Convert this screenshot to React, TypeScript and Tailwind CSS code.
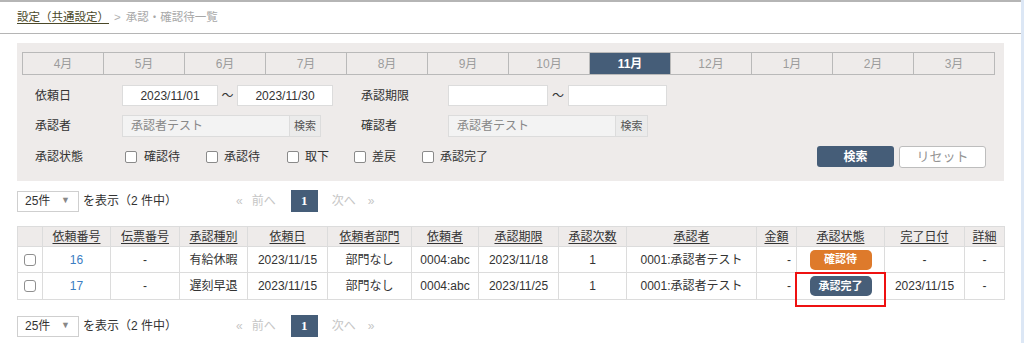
import React from "react";

const FONT = { fontFamily: '"Liberation Sans", "Noto Sans CJK JP", sans-serif' };

const months = ["4月", "5月", "6月", "7月", "8月", "9月", "10月", "11月", "12月", "1月", "2月", "3月"];

function Pager() {
  return (
    <div className="flex items-center h-[22px] text-[12px] text-[#333]">
      <div className="w-[219px] flex items-center">
        <div className="w-[62px] h-[21px] border border-[#cfcfcf] bg-white flex items-center pl-[7px] pr-[8px] justify-between">
          <span>25件</span>
          <span className="text-[9px] text-[#888]">▼</span>
        </div>
        <span className="ml-[4px]">を表示（2 件中）</span>
      </div>
      <span className="text-[#c6c6c6] text-[12px]">«</span>
      <span className="ml-[9px] text-[#c6c6c6]">前へ</span>
      <div className="ml-[15px] w-[27px] h-[22px] bg-[#455d78] text-white font-bold flex items-center justify-center text-[13px]" style={{ fontFamily: '"Liberation Serif", serif' }}>1</div>
      <span className="ml-[14px] text-[#c6c6c6]">次へ</span>
      <span className="ml-[12px] text-[#c6c6c6]">»</span>
    </div>
  );
}

function Check() {
  return <div className="w-[12px] h-[12px] border border-[#8a8a8a] rounded-[2px] bg-white shrink-0" />;
}

const cols = [25, 68, 69, 68, 80, 84, 67, 80, 68, 130, 40, 88, 80, 40];
const headers = ["", "依頼番号", "伝票番号", "承認種別", "依頼日", "依頼者部門", "依頼者", "承認期限", "承認次数", "承認者", "金額", "承認状態", "完了日付", "詳細"];

type Row = {
  no: string; kind: string; date: string; limit: string; status: "wait" | "done"; done: string; h: string;
};
const rows: Row[] = [
  { no: "16", kind: "有給休暇", date: "2023/11/15", limit: "2023/11/18", status: "wait", done: "-", h: "h-[26px]" },
  { no: "17", kind: "遅刻早退", date: "2023/11/15", limit: "2023/11/25", status: "done", done: "2023/11/15", h: "h-[27px]" },
];

export default function App() {
  return (
    <div className="w-[1024px] h-[343px] flex bg-white overflow-hidden text-[#333]" style={FONT}>
      <div className="w-[1021px] flex flex-col">
        <div className="h-[2px] bg-[#b5b5b5]" />
        <div className="h-[31px] flex items-center pl-[17px] text-[11.5px]">
          <span className="text-[#4a4828] underline underline-offset-[2px]">設定（共通設定）</span>
          <span className="text-[#b0b0b0] ml-[5px]">&gt;</span>
          <span className="text-[#a8a8a8] ml-[5px]">承認・確認待一覧</span>
        </div>
        <div className="h-px bg-[#b5b5b5]" />

        <div className="pl-[17px] pt-[9px]">
          {/* filter panel */}
          <div className="w-[987px] bg-[#eeebea] pt-[9px] pl-[5px] pr-[9px] pb-[14px] text-[12px]">
            <div className="flex h-[23px] border border-[#b9b9b9]">
              {months.map((m, i) => (
                <div
                  key={m}
                  className={
                    "flex-1 flex items-center justify-center " +
                    (i > 0 ? "border-l border-[#b9b9b9] " : "") +
                    (m === "11月" ? "bg-[#455d78] text-white font-bold" : "text-[#9c9c9c]")
                  }
                >
                  {m}
                </div>
              ))}
            </div>

            <div className="mt-[10px] h-[21px] flex items-center pl-[13px]">
              <div className="w-[87px]">依頼日</div>
              <div className="w-[239px] flex items-center">
                <div className="w-[96px] h-[21px] bg-white border border-[#dcdcdc] flex items-center justify-center">2023/11/01</div>
                <div className="w-[19px] text-center">～</div>
                <div className="w-[96px] h-[21px] bg-white border border-[#dcdcdc] flex items-center justify-center">2023/11/30</div>
              </div>
              <div className="w-[87px]">承認期限</div>
              <div className="flex items-center">
                <div className="w-[100px] h-[21px] bg-white border border-[#dcdcdc]" />
                <div className="w-[20px] text-center">～</div>
                <div className="w-[99px] h-[21px] bg-white border border-[#dcdcdc]" />
              </div>
            </div>

            <div className="mt-[9px] h-[22px] flex items-center pl-[13px]">
              <div className="w-[87px]">承認者</div>
              <div className="w-[239px] flex items-center">
                <div className="w-[168px] h-[22px] bg-[#f3f3f3] border border-[#dcdcdc] flex items-center pl-[8px] text-[#888]">承認者テスト</div>
                <div className="w-[31px] h-[22px] bg-[#ebebeb] border border-[#dcdcdc] border-l-0 flex items-center justify-center text-[11px] text-[#555]">検索</div>
              </div>
              <div className="w-[87px]">確認者</div>
              <div className="flex items-center">
                <div className="w-[168px] h-[22px] bg-[#f3f3f3] border border-[#dcdcdc] flex items-center pl-[8px] text-[#888]">承認者テスト</div>
                <div className="w-[32px] h-[22px] bg-[#ebebeb] border border-[#dcdcdc] border-l-0 flex items-center justify-center text-[11px] text-[#555]">検索</div>
              </div>
            </div>

            <div className="mt-[9px] h-[21px] flex items-center pl-[13px]">
              <div className="w-[87px]">承認状態</div>
              <div className="ml-[3px] flex items-center">
                <div className="w-[81px] flex items-center"><Check /><span className="ml-[7px]">確認待</span></div>
                <div className="w-[81px] flex items-center"><Check /><span className="ml-[6px]">承認待</span></div>
                <div className="w-[67px] flex items-center"><Check /><span className="ml-[6px]">取下</span></div>
                <div className="w-[68px] flex items-center"><Check /><span className="ml-[6px]">差戻</span></div>
                <div className="flex items-center"><Check /><span className="ml-[6px]">承認完了</span></div>
              </div>
              <div className="ml-auto mr-[9px] flex items-center">
                <div className="w-[77px] h-[21px] bg-[#455d78] rounded-[3px] text-white font-bold flex items-center justify-center">検索</div>
                <div className="ml-[5px] w-[87px] h-[22px] bg-white border border-[#bdbdbd] rounded-[3px] text-[#949494] text-[13px] flex items-center justify-center">リセット</div>
              </div>
            </div>
          </div>

          <div className="mt-[9px]">
            <Pager />
          </div>

          {/* table */}
          <div className="relative mt-[14px] w-[987px]">
            <table className="table-fixed border-collapse w-[987px] text-[12px]">
              <colgroup>
                {cols.map((w, i) => (
                  <col key={i} style={{ width: w }} />
                ))}
              </colgroup>
              <thead>
                <tr className="h-[20px] bg-[#eeebea]">
                  {headers.map((h, i) => (
                    <th key={i} className="border border-[#dcdcdc] font-normal p-0 text-center">
                      {h && <span className="underline underline-offset-[2px] text-[#333]">{h}</span>}
                    </th>
                  ))}
                </tr>
              </thead>
              <tbody>
                {rows.map((r) => (
                  <tr key={r.no} className={r.h + " bg-white"}>
                    <td className="border border-[#dcdcdc] p-0">
                      <div className="flex justify-center">
                        <div className="w-[12px] h-[12px] border border-[#8f8f8f] rounded-[3px] bg-white" />
                      </div>
                    </td>
                    <td className="border border-[#dcdcdc] text-center text-[#3b7dc2]">{r.no}</td>
                    <td className="border border-[#dcdcdc] text-center">-</td>
                    <td className="border border-[#dcdcdc] text-center">{r.kind}</td>
                    <td className="border border-[#dcdcdc] text-center">{r.date}</td>
                    <td className="border border-[#dcdcdc] text-center">部門なし</td>
                    <td className="border border-[#dcdcdc] text-center">0004:abc</td>
                    <td className="border border-[#dcdcdc] text-center">{r.limit}</td>
                    <td className="border border-[#dcdcdc] text-center">1</td>
                    <td className="border border-[#dcdcdc] text-center">0001:承認者テスト</td>
                    <td className="border border-[#dcdcdc] text-right pr-[5px]">-</td>
                    <td className="border border-[#dcdcdc] p-0">
                      <div
                        className={
                          "mx-auto w-[62px] h-[20px] rounded-[5px] text-white font-bold text-[11px] flex items-center justify-center " +
                          (r.status === "wait" ? "bg-[#de7a2b]" : "bg-[#475e78]")
                        }
                      >
                        {r.status === "wait" ? "確認待" : "承認完了"}
                      </div>
                    </td>
                    <td className="border border-[#dcdcdc] text-center">{r.done}</td>
                    <td className="border border-[#dcdcdc] text-center">-</td>
                  </tr>
                ))}
              </tbody>
            </table>
            <div className="absolute left-[778px] top-[46px] w-[91px] h-[35px] border-2 border-[#ee1111]" />
          </div>

          <div className="mt-[15px]">
            <Pager />
          </div>
        </div>
      </div>
      <div className="w-[3px] bg-[#dce7f5]" />
    </div>
  );
}
